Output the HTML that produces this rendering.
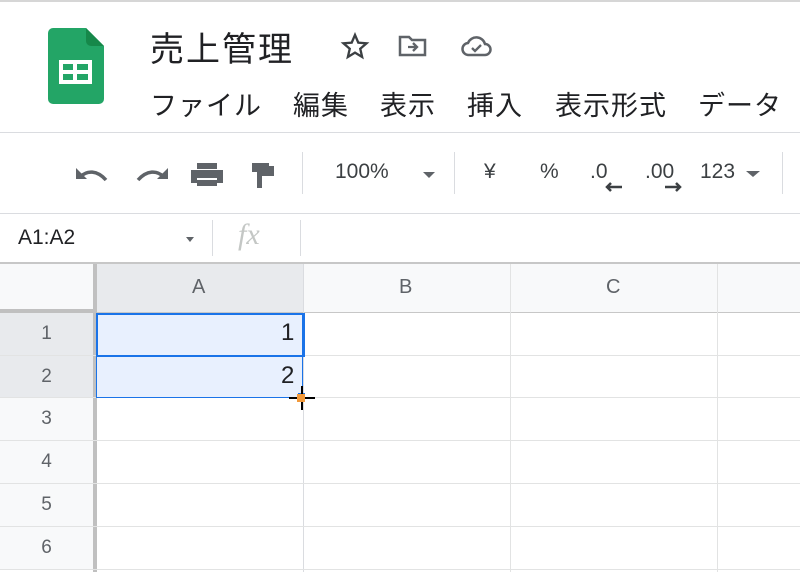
<!DOCTYPE html>
<html><head><meta charset="utf-8"><style>
body{margin:0;width:800px;height:572px;overflow:hidden;background:#fff;font-family:"Liberation Sans","Noto Sans CJK JP",sans-serif;position:relative}
.a{position:absolute}
.t{color:#3c4043}
.m{position:absolute;top:84px;font-size:27px;color:#202124;letter-spacing:1px;white-space:nowrap}
.sep{position:absolute;width:1px;background:#dadce0}
.hl{position:absolute;height:1px;background:#e2e3e3;left:0;width:800px}
.vl{position:absolute;width:1px;background:#e2e3e3}
.rh{position:absolute;left:0;width:93px;background:#f8f9fa;color:#5f6368;font-size:19px;text-align:center}
.tb{position:absolute;top:160px;font-size:21px;color:#3c4043}
</style></head><body>
<div class="a" style="left:0;top:0;width:800px;height:2px;background:#d6d6d6"></div>
<svg class="a" style="left:48px;top:28px" width="56" height="76" viewBox="0 0 56 76">
<path d="M5 0H38L56 18V71a5 5 0 0 1-5 5H5a5 5 0 0 1-5-5V5a5 5 0 0 1 5-5z" fill="#23a566"/>
<path d="M38 0L56 18H43a5 5 0 0 1-5-5z" fill="#16884a"/>
<rect x="11" y="32" width="33" height="24" fill="#fff"/>
<rect x="15" y="36" width="10" height="6" fill="#23a566"/><rect x="29" y="36" width="11" height="6" fill="#23a566"/>
<rect x="15" y="46" width="10" height="6" fill="#23a566"/><rect x="29" y="46" width="11" height="6" fill="#23a566"/>
</svg>
<div class="a" style="left:150px;top:22px;font-size:34px;letter-spacing:2px;color:#202124">売上管理</div>
<svg class="a" style="left:340px;top:32px" width="30" height="28" viewBox="0 0 24 24"><path d="M12 2.5l2.8 6.6 7.1.6-5.4 4.7 1.6 7-6.1-3.7-6.1 3.7 1.6-7-5.4-4.7 7.1-.6z" fill="none" stroke="#3c4043" stroke-width="2"/></svg>
<svg class="a" style="left:398px;top:34px" width="30" height="24" viewBox="0 0 30 24"><path d="M2 3h9l3 3h13v15H2z" fill="none" stroke="#5f6368" stroke-width="2.5"/><path d="M10 13h9M15 9l4 4-4 4" fill="none" stroke="#5f6368" stroke-width="2.3"/></svg>
<svg class="a" style="left:460px;top:34px" width="34" height="24" viewBox="0 0 34 24"><path d="M9 21a6 6 0 0 1-1-12 9 9 0 0 1 17 1 5.5 5.5 0 0 1 0 11z" fill="none" stroke="#5f6368" stroke-width="2.5"/><path d="M12 14l3 3 6-6" fill="none" stroke="#5f6368" stroke-width="2.3"/></svg>
<div class="m" style="left:150px">ファイル</div>
<div class="m" style="left:293px">編集</div>
<div class="m" style="left:380px">表示</div>
<div class="m" style="left:467px">挿入</div>
<div class="m" style="left:555px">表示形式</div>
<div class="m" style="left:698px">データ</div>
<div class="a" style="left:0;top:132px;width:800px;height:1px;background:#dadce0"></div>
<svg class="a" style="left:72px;top:160px" width="260" height="30" viewBox="0 0 260 30">
<path d="M4 8v11h11z" fill="#5f6368"/><path d="M8 17c7-7 17-7 26 3" fill="none" stroke="#5f6368" stroke-width="3.5"/>
<path d="M96 8v11h-11z" fill="#5f6368"/><path d="M92 17c-7-7-17-7-26 3" fill="none" stroke="#5f6368" stroke-width="3.5"/>
<rect x="125" y="3" width="20" height="6" fill="#5f6368"/><path d="M119 10h32v13h-6v-5h-20v5h-6z" fill="#5f6368"/><rect x="125" y="20" width="20" height="6" fill="#5f6368"/>
<path d="M180 3h17v9h-17z M197 6h5v10h-12v12h-5v-16h12z" fill="#5f6368"/>
</svg>
<div class="sep" style="left:302px;top:152px;height:42px"></div>
<div class="tb" style="left:335px">100%</div>
<div class="a" style="left:423px;top:172px;border:6px solid transparent;border-top:6px solid #5f6368;border-bottom:0"></div>
<div class="sep" style="left:454px;top:152px;height:42px"></div>
<div class="tb" style="left:484px">¥</div>
<div class="tb" style="left:540px">%</div>
<div class="tb" style="left:590px">.0</div>
<svg class="a" style="left:604px;top:182px" width="20" height="10"><path d="M3 5h15M7 1l-4 4 4 4" fill="none" stroke="#3c4043" stroke-width="2.5"/></svg>
<div class="tb" style="left:645px">.00</div>
<svg class="a" style="left:663px;top:182px" width="20" height="10"><path d="M2 5h15M13 1l4 4-4 4" fill="none" stroke="#3c4043" stroke-width="2.5"/></svg>
<div class="tb" style="left:700px">123</div>
<div class="a" style="left:746px;top:171px;border:7px solid transparent;border-top:6px solid #5f6368;border-bottom:0"></div>
<div class="sep" style="left:782px;top:152px;height:42px"></div>
<div class="a" style="left:0;top:213px;width:800px;height:1px;background:#dadce0"></div>
<div class="a" style="left:18px;top:226px;font-size:21px;color:#202124">A1:A2</div>
<div class="a" style="left:186px;top:237px;border:4px solid transparent;border-top:5px solid #5f6368;border-bottom:0"></div>
<div class="sep" style="left:212px;top:220px;height:36px"></div>
<div class="a" style="left:238px;top:218px;font-size:30px;font-style:italic;color:#c4c7c5;font-family:'Liberation Serif',serif">fx</div>
<div class="sep" style="left:300px;top:220px;height:36px"></div>
<div class="a" style="left:0;top:262px;width:800px;height:2px;background:#c7c7c7"></div>
<div class="a" style="left:0;top:264px;width:800px;height:49px;background:#f8f9fa"></div>
<div class="a" style="left:97px;top:264px;width:206px;height:49px;background:#e8eaed"></div>
<div class="a" style="left:0;top:264px;width:93px;height:45px;background:#f8f9fa"></div>
<div class="a" style="left:93px;top:264px;width:4px;height:308px;background:#c0c0c0"></div>
<div class="a" style="left:0;top:309px;width:97px;height:4px;background:#c0c0c0"></div>
<div class="a" style="left:97px;top:312px;width:703px;height:1px;background:#c7c7c7"></div>
<div class="a" style="left:192px;top:276px;font-size:20px;color:#5f6368">A</div>
<div class="a" style="left:399px;top:276px;font-size:20px;color:#5f6368">B</div>
<div class="a" style="left:606px;top:276px;font-size:20px;color:#5f6368">C</div>
<div class="vl" style="left:303px;top:264px;height:308px;background:#dadce0"></div>
<div class="vl" style="left:510px;top:264px;height:308px"></div>
<div class="vl" style="left:717px;top:264px;height:308px"></div>
<div class="rh" style="top:313px;height:42px;line-height:42px;background:#e8eaed">1</div>
<div class="rh" style="top:356px;height:41px;line-height:41px;background:#e8eaed">2</div>
<div class="rh" style="top:398px;height:42px;line-height:42px">3</div>
<div class="rh" style="top:441px;height:42px;line-height:42px">4</div>
<div class="rh" style="top:484px;height:42px;line-height:42px">5</div>
<div class="rh" style="top:527px;height:42px;line-height:42px">6</div>
<div class="hl" style="top:355px"></div>
<div class="hl" style="top:397px"></div>
<div class="hl" style="top:440px"></div>
<div class="hl" style="top:483px"></div>
<div class="hl" style="top:526px"></div>
<div class="hl" style="top:569px"></div>
<div class="a" style="left:96px;top:313px;width:205px;height:83px;background:#e8f0fe;border:1px solid #1a73e8"></div>
<div class="a" style="left:96px;top:313px;width:205px;height:40px;border:2px solid #1a73e8"></div>
<div class="a" style="left:281px;top:319px;font-size:24px;color:#202124">1</div>
<div class="a" style="left:281px;top:362px;font-size:24px;color:#202124">2</div>
<div class="a" style="left:298px;top:393px;width:7px;height:7px;background:#1a73e8"></div>
<div class="a" style="left:301px;top:386px;width:2px;height:24px;background:#000"></div>
<div class="a" style="left:289px;top:397px;width:26px;height:2px;background:#000"></div>
<div class="a" style="left:297px;top:394px;width:8px;height:8px;background:#f29a3c"></div>
</body></html>
